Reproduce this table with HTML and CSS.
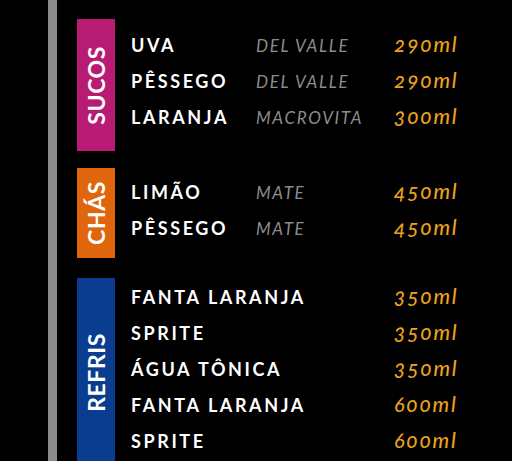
FILE: index.html
```html
<!DOCTYPE html>
<html lang="pt-BR">
<head>
<meta charset="utf-8">
<title>Bebidas</title>
<link rel="stylesheet" href="styles.css">
</head>
<body>
<div class="page">
  <div class="rail"></div>
  <main class="menu">
    <section class="section">
      <div class="label label--sucos"><span class="label-text">SUCOS</span></div>
      <div class="items items--sucos">
        <span class="name">UVA</span><span class="brand">DEL VALLE</span><span class="price">290ml</span>
        <span class="name">PÊSSEGO</span><span class="brand">DEL VALLE</span><span class="price">290ml</span>
        <span class="name">LARANJA</span><span class="brand">MACROVITA</span><span class="price">300ml</span>
      </div>
    </section>
    <section class="section">
      <div class="label label--chas"><span class="label-text">CHÁS</span></div>
      <div class="items items--chas">
        <span class="name">LIMÃO</span><span class="brand">MATE</span><span class="price">450ml</span>
        <span class="name">PÊSSEGO</span><span class="brand">MATE</span><span class="price">450ml</span>
      </div>
    </section>
    <section class="section section--refris">
      <div class="label label--refris"><span class="label-text">REFRIS</span></div>
      <div class="items items--refris">
        <span class="name name--wide">FANTA LARANJA</span><span class="price">350ml</span>
        <span class="name name--wide">SPRITE</span><span class="price">350ml</span>
        <span class="name name--wide">ÁGUA TÔNICA</span><span class="price">350ml</span>
        <span class="name name--wide">FANTA LARANJA</span><span class="price">600ml</span>
        <span class="name name--wide">SPRITE</span><span class="price">600ml</span>
      </div>
    </section>
  </main>
</div>
</body>
</html>
```

FILE: styles.css
```css
html, body {
  margin: 0;
  padding: 0;
  background: #000;
}
body {
  height: 461px;
  overflow: hidden;
  font-family: Lato, "Open Sans", "Liberation Sans", sans-serif;
}
.page {
  display: flex;
  padding-left: 48px;
  min-height: 461px;
}
.rail {
  width: 9px;
  background: #8b8b8b;
  flex: none;
}
.menu {
  margin-left: 20px;
  padding-top: 19px;
  display: flex;
  flex-direction: column;
  gap: 17px;
}
.section {
  display: flex;
}
.section--refris {
  margin-top: 3px;
}
.label {
  width: 38px;
  flex: none;
  display: flex;
  align-items: center;
  justify-content: center;
}
.label--sucos { background: #b81b73; }
.label--chas { background: #e0660e; }
.label--refris { background: #0a3d8f; }
.label-text {
  writing-mode: vertical-rl;
  transform: rotate(180deg);
  color: #fff;
  font-weight: 700;
  font-size: 23px;
  letter-spacing: 0.6px;
  line-height: 1;
}
.items {
  margin-left: 16px;
  display: grid;
  grid-template-columns: 125px 138px auto;
  grid-auto-rows: 36px;
  align-items: baseline;
  line-height: 36px;
}
.items--sucos { padding: 7px 0 17px; }
.items--chas { padding: 5px 0 13px; }
.items--refris { padding: 0 0 8px; }
.name {
  color: #fff;
  font-weight: 700;
  font-size: 18px;
  letter-spacing: 2.6px;
  white-space: nowrap;
}
.name--wide {
  grid-column: span 2;
}
.brand {
  color: #8c8c8c;
  font-style: italic;
  font-size: 17px;
  letter-spacing: 1.7px;
  white-space: nowrap;
}
.price {
  color: #eca21c;
  font-style: italic;
  font-weight: 500;
  font-size: 21px;
  letter-spacing: 1.8px;
  font-variant-numeric: oldstyle-nums;
}
```
